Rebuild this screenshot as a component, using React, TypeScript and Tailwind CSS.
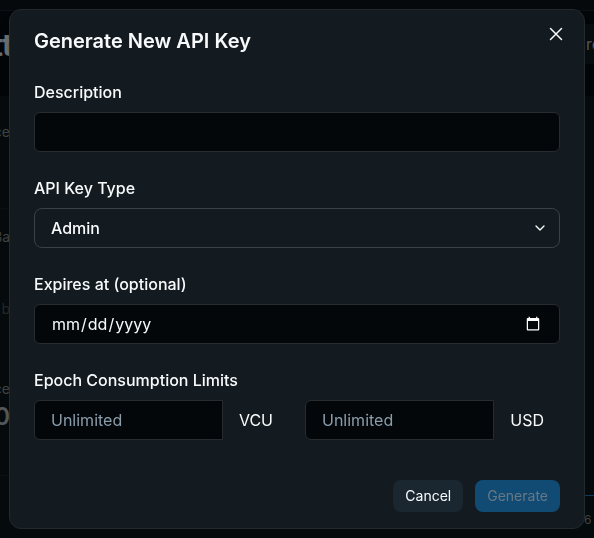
import { ChevronDown } from "lucide-react";

const label = "block text-base leading-6 font-medium text-[#f8fafb]";
const field =
  "h-10 w-full border border-[#272c30] bg-[#030709] px-4 text-base text-[#f8fafb] placeholder:text-[#8b9dab] outline-none";

function LimitField({ id, unit }: { id: string; unit: string }) {
  return (
    <div className="flex min-w-0 flex-1 items-center">
      <input id={id} aria-label={unit} placeholder="Unlimited" className={`${field} min-w-0 flex-1 rounded-l-md`} />
      <label htmlFor={id} className="px-4 text-base leading-6 text-[#f8fafb]">
        {unit}
      </label>
    </div>
  );
}

function Backdrop() {
  return (
    <div aria-hidden="true" className="fixed inset-0 flex flex-col overflow-hidden bg-[#030608] text-sm text-[#404446]">
      <div className="h-[11px] shrink-0 border-b border-[#0c1114] bg-[#05090c]" />
      <div className="flex h-[85px] shrink-0 items-start justify-between">
        <span className="mt-4 -ml-2 text-[30px] leading-9 font-bold text-[#6c6e6f]">tt</span>
        <div className="mt-[13px] h-10 w-[10px] bg-[#080d10] pl-0.5 text-base leading-10 text-[#55595b]">re</div>
      </div>
      <div className="flex flex-1 justify-between bg-[#060c0d]">
        <div className="flex w-[10px] flex-col items-end whitespace-nowrap">
          <span className="mt-6 leading-6">ce</span>
          <div className="mt-16 w-full border-t border-[#0b1112]" />
          <span className="mt-4 leading-6">Ba</span>
          <span className="mt-12 leading-6 text-[#25292b]">b</span>
          <span className="mt-14 leading-6">ce</span>
          <span className="text-2xl leading-8 font-semibold text-[#55595b]">0</span>
          <div className="mt-[42px] w-full border-t border-[#0b1112]" />
        </div>
        <div className="w-[10px]">
          <div className="h-[400px] border-b border-[#0d3e60]" />
          <span className="block pt-3 text-xs leading-6">6</span>
        </div>
      </div>
    </div>
  );
}

export default function App() {
  return (
    <div className="font-[Inter,sans-serif]">
      <Backdrop />
      <div className="relative flex min-h-screen items-center justify-center p-[9px]">
        <form
          role="dialog"
          aria-labelledby="dialog-title"
          className="w-full max-w-xl rounded-xl border border-[#23292d] bg-[#131b21] px-6 py-4 shadow-lg"
          onSubmit={(e) => e.preventDefault()}
        >
          <div className="mb-6 flex items-start justify-between">
            <h1 id="dialog-title" className="text-xl leading-[30px] font-semibold text-[#f8fafb]">
              Generate New API Key
            </h1>
            <button type="button" aria-label="Close" className="-mr-2 flex size-6 items-start justify-center text-[#f8fafb]">
              <svg viewBox="0 0 20 20" className="size-5" fill="none" stroke="currentColor" strokeWidth="1.5" strokeLinecap="round">
                <path d="M4.5 2.5L15.5 13.5M15.5 2.5L4.5 13.5" />
              </svg>
            </button>
          </div>

          <div className="flex flex-col gap-6">
            <div className="flex flex-col gap-2">
              <label htmlFor="description" className={label}>Description</label>
              <input id="description" type="text" className={`${field} rounded-md`} />
            </div>
            <div className="flex flex-col gap-2">
              <label htmlFor="type" className={label}>API Key Type</label>
              <div className="relative">
                <select
                  id="type"
                  className="block h-10 w-full appearance-none rounded-lg border border-[#3a4147] bg-transparent px-4 text-base font-medium text-[#f8fafb] outline-none"
                >
                  <option>Admin</option>
                </select>
                <ChevronDown className="pointer-events-none absolute top-3 right-3 size-4 text-[#f8fafb]" />
              </div>
            </div>
            <div className="flex flex-col gap-2">
              <label htmlFor="expires" className={label}>Expires at (optional)</label>
              <input id="expires" type="date" className={`${field} rounded-md scheme-dark`} />
            </div>
            <fieldset>
              <legend className={`${label} mb-2`}>Epoch Consumption Limits</legend>
              <div className="flex gap-4">
                <LimitField id="vcu" unit="VCU" />
                <LimitField id="usd" unit="USD" />
              </div>
            </fieldset>
          </div>

          <div className="mt-10 flex justify-end gap-3 text-sm">
            <button type="button" className="h-8 rounded-lg bg-[#1a2731] px-3 text-[#f8fafb]">
              Cancel
            </button>
            <button type="submit" disabled className="h-8 rounded-lg bg-[#114b74] px-3 text-[#687883]">
              Generate
            </button>
          </div>
        </form>
      </div>
    </div>
  );
}
